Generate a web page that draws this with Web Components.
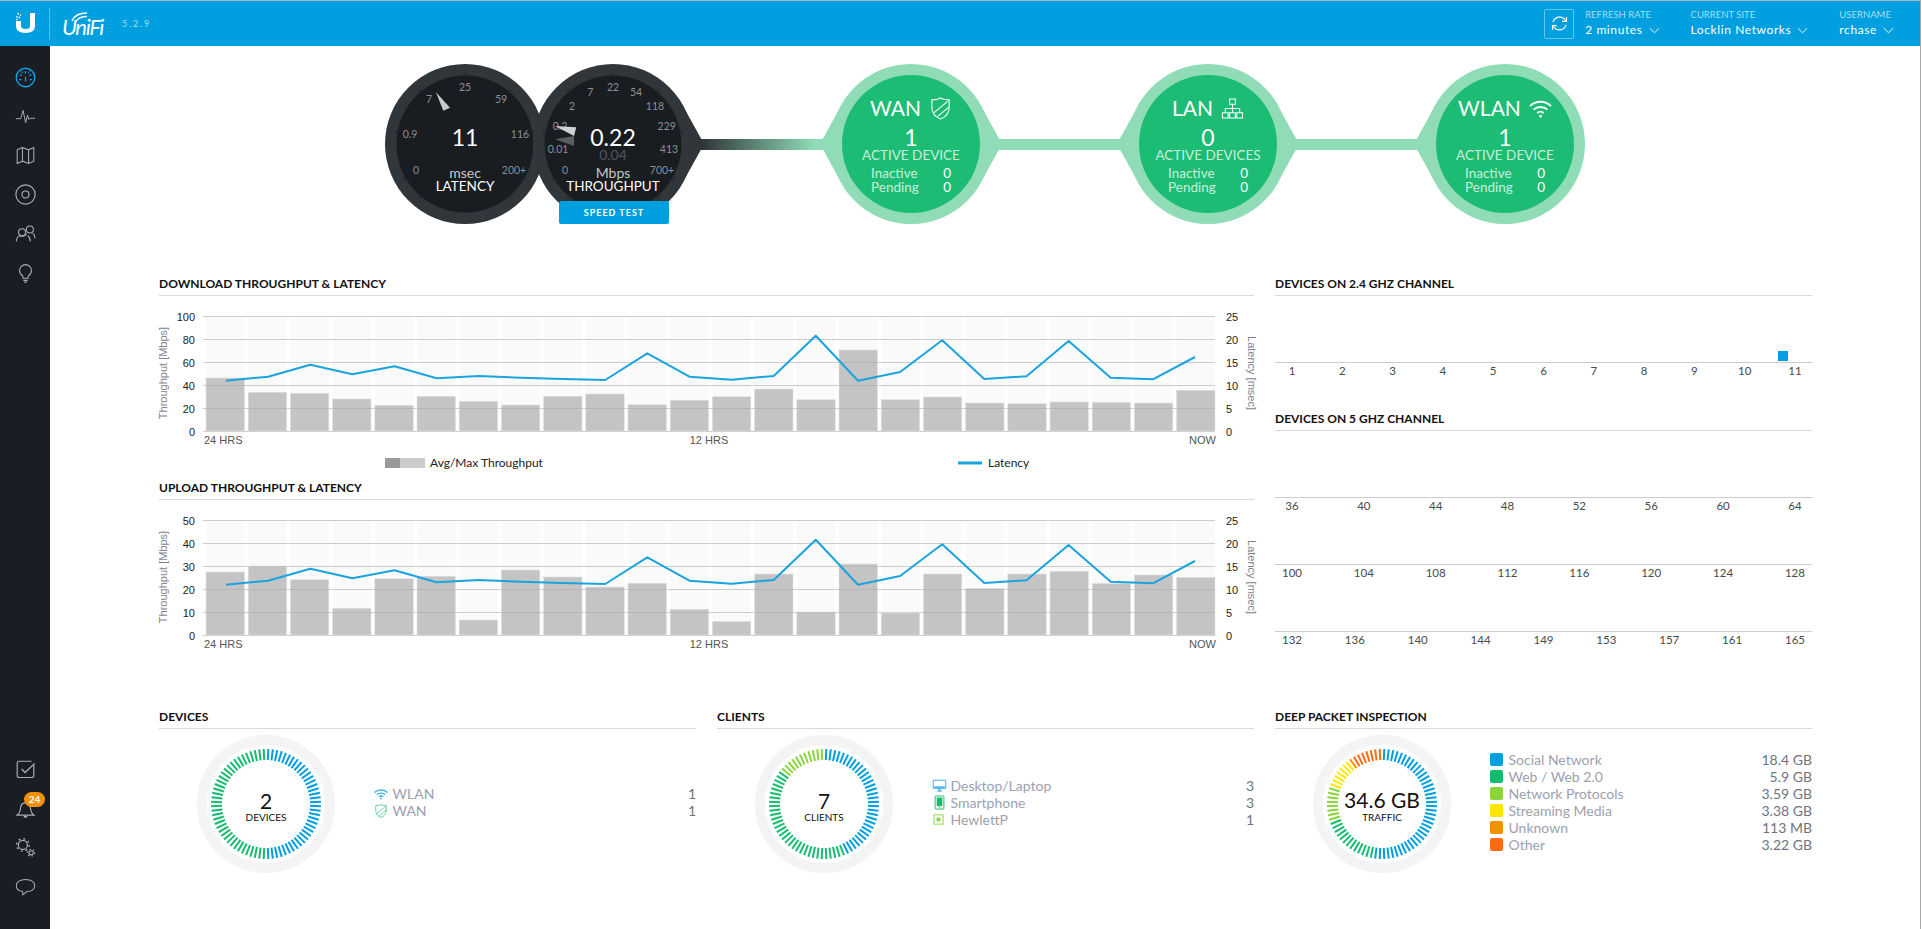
<!DOCTYPE html>
<html lang="en">
<head>
<meta charset="utf-8">
<title>UniFi Dashboard</title>
<style>
  html, body { margin: 0; height: 100%; background: #fff; }
  body { width: 1920px; height: 929px; overflow: hidden; display: flex; flex-direction: column; font-family: Lato, "Liberation Sans", sans-serif; border-right: 1px solid #aaa; }
  .shell { flex: 1; display: flex; min-height: 0; }
  main { flex: 1; min-width: 0; padding-top: 18px; }
  .topology { display: flex; justify-content: center; height: 160px; }
  .panels { display: grid; grid-template-columns: repeat(3, 537px); column-gap: 21px; row-gap: 25px; margin: 51px 0 0 109px; grid-template-rows: 408px auto; }
  .wide { grid-column: span 2; }
  .stats { display: flex; padding-top: 6px; }
  .rows { flex: 1; align-self: center; margin-bottom: 4px; }
  .channels { padding-top: 15px; margin-bottom: 32px; }
  .channels.last { margin-bottom: 0; }
  .sw { width: 13px; height: 13px; border-radius: 2px; display: block; }
</style>
</head>
<body>
<uni-topbar></uni-topbar>
<div class="shell">
  <uni-sidenav></uni-sidenav>
  <main>
    <div class="topology">
      <net-gauge style="margin-right:-12px" value="11" unit="msec" label="LATENCY"
        ticks='[["25",0,-57],["7",-36,-45],["59",36,-45],["0.9",-55,-10],["116",55,-10],["0",-49,26],["200+",49,26]]'
        needles='[["-29,-51.7 -21.7,-33.3 -15,-36.3","#c9cbcc"]]'></net-gauge>
      <net-gauge value="0.22" sub="0.04" unit="Mbps" label="THROUGHPUT" tail
        ticks='[["22",0,-57],["7",-22.7,-52],["54",23,-52],["2",-41,-38],["118",42,-38],["0.2",-53,-18],["229",53.7,-18],["0.01",-55,5],["413",56,4.5],["0",-48,26],["700+",49,26]]'
        needles='[["-58,-18 -36.7,-16.7 -39,-8","#cfd1d2"],["-58,-4.7 -39,-8 -39,2","#5a5e62"]]'>
        <uni-button>SPEED TEST</uni-button>
      </net-gauge>
      <net-link style="flex-basis:138px;background:linear-gradient(to right,#2f3438 6%,#8fdcb7 88%)"></net-link>
      <net-node name="WAN" icon="shield" count="1" caption="ACTIVE DEVICE" left right></net-node>
      <net-link style="flex-basis:137px"></net-link>
      <net-node name="LAN" icon="lan" count="0" caption="ACTIVE DEVICES" left right></net-node>
      <net-link style="flex-basis:137px"></net-link>
      <net-node name="WLAN" icon="wifi" count="1" caption="ACTIVE DEVICE" left></net-node>
    </div>

    <div class="panels">
      <section class="wide">
        <panel-title>DOWNLOAD THROUGHPUT &amp; LATENCY</panel-title>
        <throughput-chart max="100" legend
          bars="53,38.7,37.7,32,25.7,34.7,29.7,26,34.7,37,26.3,30.7,34.3,42,31.3,81,31.3,34,28,27.3,29,28.7,28,40.7"></throughput-chart>
        <panel-title>UPLOAD THROUGHPUT &amp; LATENCY</panel-title>
        <throughput-chart max="50"
          bars="63,69,55.3,26.7,56.3,58.7,15,65,58,48,51.7,25.7,13.5,61,23,71,22,61,46.6,61,63.7,51.5,60,57.6"></throughput-chart>
      </section>
      <section>
        <panel-title>DEVICES ON 2.4 GHZ CHANNEL</panel-title>
        <div class="channels">
          <channel-row labels="1,2,3,4,5,6,7,8,9,10,11" mark="11"></channel-row>
        </div>
        <panel-title>DEVICES ON 5 GHZ CHANNEL</panel-title>
        <div class="channels last">
          <channel-row labels="36,40,44,48,52,56,60,64"></channel-row>
          <channel-row labels="100,104,108,112,116,120,124,128"></channel-row>
          <channel-row labels="132,136,140,144,149,153,157,161,165"></channel-row>
        </div>
      </section>

      <section>
        <panel-title>DEVICES</panel-title>
        <div class="stats">
          <ring-chart total="2" label="DEVICES" segments="180:#009fe0,360:#14bc6e"></ring-chart>
          <div class="rows">
            <stat-row value="1"><ui-icon slot="icon" name="wifi" style="color:#1aa7e3;--size:14px"></ui-icon>WLAN</stat-row>
            <stat-row value="1"><ui-icon slot="icon" name="shield" style="color:#14bc6e;--size:14px"></ui-icon>WAN</stat-row>
          </div>
        </div>
      </section>
      <section>
        <panel-title>CLIENTS</panel-title>
        <div class="stats">
          <ring-chart total="7" label="CLIENTS" segments="154:#009fe0,309:#14bc6e,360:#8ad53a"></ring-chart>
          <div class="rows">
            <stat-row value="3"><ui-icon slot="icon" name="desktop" style="color:#38b2e8;--size:15px"></ui-icon>Desktop/Laptop</stat-row>
            <stat-row value="3"><ui-icon slot="icon" name="phone" style="color:#14bc6e;--size:15px"></ui-icon>Smartphone</stat-row>
            <stat-row value="1"><ui-icon slot="icon" name="chip" style="color:#8ad53a;--size:13px"></ui-icon>HewlettP</stat-row>
          </div>
        </div>
      </section>
      <section>
        <panel-title>DEEP PACKET INSPECTION</panel-title>
        <div class="stats">
          <ring-chart total="34.6 GB" label="TRAFFIC" shift="-1" segments="191:#009fe0,252:#14bc6e,289:#8ad53a,324:#ffe600,326:#f39200,360:#ff6a13"></ring-chart>
          <div class="rows">
            <stat-row value="18.4 GB"><span slot="icon" class="sw" style="background:#009fe0"></span>Social Network</stat-row>
            <stat-row value="5.9 GB"><span slot="icon" class="sw" style="background:#14bc6e"></span>Web / Web 2.0</stat-row>
            <stat-row value="3.59 GB"><span slot="icon" class="sw" style="background:#8ad53a"></span>Network Protocols</stat-row>
            <stat-row value="3.38 GB"><span slot="icon" class="sw" style="background:#ffe600"></span>Streaming Media</stat-row>
            <stat-row value="113 MB"><span slot="icon" class="sw" style="background:#f39200"></span>Unknown</stat-row>
            <stat-row value="3.22 GB"><span slot="icon" class="sw" style="background:#ff6a13"></span>Other</stat-row>
          </div>
        </div>
      </section>
    </div>
  </main>
</div>

<script>
const ICONS = {
  dash: '<circle cx="12" cy="12" r="10.6" stroke-width="1.6"/><path d="M12 4.5v3M5.5 8.5l2.4 1.4M18.5 8.5l-2.4 1.4M4.6 14.5h2.6M16.8 14.5h2.6M12 11v5.5" stroke-width="1.4"/><path d="M7.5 4.8l1.3 2.2M16.5 4.8l-1.3 2.2" stroke-width="1.2"/>',
  pulse: '<path d="M1 14.5h5.5L9.2 5l2.9 14 2.2-8.5 1.6 5 1.5-1.5H23" stroke-width="1.1"/>',
  map: '<path d="M2.5 5.5L8.5 3l7 2.5 6-2.5v15.5l-6 2.5-7-2.5-6 2.5zM8.5 3v15.5M15.5 5.5V21" stroke-width="1.2"/>',
  disc: '<circle cx="12" cy="12" r="11" stroke-width="1.3"/><circle cx="12" cy="12" r="4" stroke-width="1.3"/>',
  users: '<circle cx="8" cy="10.5" r="4" stroke-width="1.2"/><circle cx="17" cy="7.5" r="4" stroke-width="1.2"/><path d="M1.5 21c0-3.5 2-5.6 3.8-6.6M14.5 14.5c1.6 1 3 3 3 6.5M11 14.4c1-.4 1.7-1.1 2.4-1.6M20.2 11.5c1.5 1 2.6 3 2.6 6" stroke-width="1.2"/><path d="M5 14.5c2 1 4 1 6 0" stroke-width="1.2"/>',
  bulb: '<path d="M9 18.5v-2.2C7 15 5.2 12.8 5.2 9.8a6.8 6.8 0 0 1 13.6 0c0 3-1.8 5.2-3.8 6.5v2.2zM9.5 21h5M10.5 23h3" stroke-width="1.2"/>',
  check: '<path d="M21.5 6.5V19a2.2 2.2 0 0 1-2.2 2.2H4.7A2.2 2.2 0 0 1 2.5 19V4.8a2.2 2.2 0 0 1 2.2-2.2H19" stroke-width="1.3"/><path d="M7.5 11.5l4 4L22.5 5" stroke-width="1.5"/>',
  bell: '<path d="M2.5 19.5c2.2-1.5 3.5-4 3.8-8 .3-3.6 2.3-6 5.7-6s5.4 2.4 5.7 6c.3 4 1.6 6.5 3.8 8z" stroke-width="1.3"/><path d="M10 21.5h4" stroke-width="2"/>',
  gears: '<circle cx="9" cy="9" r="5.2" stroke-width="1.4"/><circle cx="9" cy="9" r="7.2" stroke-width="1.6" stroke-dasharray="2.2 3.4"/><circle cx="18.5" cy="18" r="2.4" stroke-width="1.2"/><circle cx="18.5" cy="18" r="4" stroke-width="1.4" stroke-dasharray="1.6 2.5"/>',
  chat: '<path d="M12 4C5.8 4 1.5 6.8 1.5 11c0 3.4 3.2 6 7.2 6.8L9 21.5l4.6-3.7C19 17.4 22.5 14.6 22.5 11 22.5 6.8 18.2 4 12 4z" stroke-width="1.2"/>',
  shield: '<path d="M3 3c3 0 6.5-.5 9-2 2.5 1.5 6 2 9 2v8c0 6-4 10-9 12-5-2-9-6-9-12z" stroke-width="1.1"/><path d="M5 16.500L19.500 4.500M9 20.500L20.500 10.500" stroke-width="1.1"/>',
  lan: '<path d="M9 2h6v5.5H9zM1.5 16.5h6V22h-6zM9 16.5h6V22H9zM16.5 16.5h6V22h-6zM12 7.5v9M4.5 16.5V12h15v4.5" stroke-width="1.1"/>',
  wifi: '<path d="M1 9.5c6.2-6 15.8-6 22 0M4.8 13.2c4-3.8 10.4-3.8 14.4 0M8.5 16.8c2-1.8 5-1.8 7 0" stroke-width="2"/><circle cx="12" cy="20" r="1.4" fill="currentColor" stroke="none"/>',
  desktop: '<path d="M2 3.5h20v13H2zM8 21h8" stroke-width="1.6"/><path d="M3.5 13h17v3h-17zM10.5 16.5h3l.6 4H9.9z" fill="currentColor" stroke="none" opacity=".85"/>',
  phone: '<rect x="5" y="1.5" width="14" height="21" rx="1" stroke-width="1.5"/><rect x="7.5" y="4" width="9" height="14" fill="currentColor" stroke="none"/><circle cx="12" cy="20.3" r="1" fill="currentColor" stroke="none"/>',
  chip: '<rect x="3.5" y="3.5" width="17" height="17" stroke-width="1.7"/><rect x="8.5" y="8.5" width="7" height="7" fill="currentColor" stroke="none"/>',
  sync: '<path d="M4.5 10.5A8 8 0 0 1 19 8.5M19.5 13.5A8 8 0 0 1 5 15.5" stroke-width="1.3"/><path d="M20 4.5v5h-5M4 19.5v-5h5" stroke-width="1.3"/>',
  chevron: '<path d="M2 7l10 10L22 7" stroke-width="2"/>'
};

class UiIcon extends HTMLElement {
  connectedCallback() {
    this.attachShadow({mode: 'open'});
    this.shadowRoot.innerHTML = `
      <style>
        :host { display: inline-flex; line-height: 0; }
        svg { width: var(--size, 20px); height: var(--size, 20px); overflow: visible; fill: none; stroke: currentColor; }
      </style>
      <svg viewBox="0 0 24 24">${ICONS[this.getAttribute('name')]}</svg>`;
  }
}
customElements.define('ui-icon', UiIcon);

class UniTopbar extends HTMLElement {
  constructor() {
    super();
    const menus = [['REFRESH RATE', '2 minutes'], ['CURRENT SITE', 'Locklin Networks'], ['USERNAME', 'rchase']];
    this.attachShadow({mode: 'open'});
    this.shadowRoot.innerHTML = `
      <style>
        :host { display: flex; align-items: center; flex: 0 0 45px; background: #009fe0; border-top: 1px solid #a9b4ba; color: #fff; font-family: Lato, "Liberation Sans", sans-serif; padding: 0 26px 0 16px; }
        .u { width: 19px; height: 20px; fill: #fff; margin-bottom: 1px; }
        .sep { height: 31px; border-left: 1px dotted rgba(255,255,255,.6); margin: 0 12px 0 14px; }
        .brand { position: relative; width: 60px; font-size: 22px; font-style: italic; font-weight: 400; letter-spacing: -1.4px; line-height: 30px; padding-top: 6px; }
        .brand svg { position: absolute; left: 9px; top: 6px; width: 17px; height: 10px; fill: none; stroke: #fff; stroke-width: 1.4; }
        .ver { font-size: 9px; letter-spacing: 1.8px; color: #a6def6; }
        .spacer { flex: 1; }
        .sync { width: 28px; height: 28px; border: 1px solid rgba(255,255,255,.4); border-radius: 2px; display: flex; align-items: center; justify-content: center; margin-right: 11px; --size: 21px; }
        .menu { margin-right: 31px; --size: 11px; }
        .menu:last-child { margin-right: 0; }
        .menu small { display: block; font-size: 9.5px; line-height: 12px; color: #a6def6; }
        .menu div { display: flex; align-items: center; justify-content: space-between; gap: 6px; font-size: 12px; line-height: 16px; letter-spacing: .6px; margin-top: 1px; }
      </style>
      <svg class="u" viewBox="0 0 19 20"><path d="M0 8H5v5q0 3 4.5 3T14 13V0h5v13q0 7-9.500 7T0 13z"/><path d="M1.500 0h1.500v1.500H1.500zM4 1.500h1.200v1.500H4zM.3 3h1.400v1.500H.3zM2.600 3.800h1.500v1.500H2.600zM.3 5.800h1.400v1.500H.3z"/></svg>
      <div class="sep"></div>
      <div class="brand">UniFi<svg viewBox="0 0 17 10"><path d="M1 9C3 4 8 1 16 1M5 9.500C7 6 10 4.500 16 4.500"/></svg></div>
      <span class="ver">5.2.9</span>
      <div class="spacer"></div>
      <div class="sync"><ui-icon name="sync"></ui-icon></div>
      ${menus.map(m => `<div class="menu"><small>${m[0]}</small><div>${m[1]}<ui-icon name="chevron"></ui-icon></div></div>`).join('')}`;
  }
}
customElements.define('uni-topbar', UniTopbar);

class UniSidenav extends HTMLElement {
  constructor() {
    super();
    const item = (n, extra = '') => `<a class="${n === 'dash' ? 'on' : ''}"><ui-icon name="${n}"></ui-icon>${extra}</a>`;
    this.attachShadow({mode: 'open'});
    this.shadowRoot.innerHTML = `
      <style>
        :host { display: flex; flex-direction: column; justify-content: space-between; flex: 0 0 50px; background: #1a1d23; padding: 12px 0 23px; box-sizing: border-box; color: #a8b0b0; font-family: Lato, "Liberation Sans", sans-serif; --size: 21px; }
        a { position: relative; display: flex; align-items: center; justify-content: center; height: 39px; }
        a.on { color: #0aa3e4; }
        .badge { position: absolute; left: 24px; top: 3px; width: 21px; height: 15px; border-radius: 8px; background: #f39200; color: #fff; font-size: 10px; font-weight: 700; line-height: 15px; text-align: center; }
      </style>
      <div>${['dash', 'pulse', 'map', 'disc', 'users', 'bulb'].map(n => item(n)).join('')}</div>
      <div>${item('check')}${item('bell', '<span class="badge">24</span>')}${item('gears')}${item('chat')}</div>`;
  }
}
customElements.define('uni-sidenav', UniSidenav);

const taper = (side) => {
  const s = side === 'left' ? -1 : 1;
  return `M${s * 70} -38L${s * 88} -5.500V5.500L${s * 70} 38Z`;
};

class NetGauge extends HTMLElement {
  connectedCallback() {
    const a = n => this.getAttribute(n);
    const ticks = JSON.parse(a('ticks'));
    const needles = JSON.parse(a('needles'));
    const marks = [-120, -80, -40, 0, 40, 80, 120, -140, 140].map(d => `<rect x="-2" y="-71" width="4" height="3" fill="#282c31" transform="rotate(${d})"/>`).join('');
    this.attachShadow({mode: 'open'});
    this.shadowRoot.innerHTML = `
      <style>
        :host { position: relative; display: block; flex: 0 0 160px; width: 160px; height: 160px; font-family: Lato, "Liberation Sans", sans-serif; }
        svg { display: block; overflow: visible; }
        text { text-anchor: middle; dominant-baseline: central; }
        .tick { font-size: 10.5px; fill: #8b9095; }
        .val { font-size: 23px; fill: #fff; }
        .sub { font-size: 14px; fill: #50555a; }
        .unit { font-size: 14px; fill: #c3c7cb; }
        .name { font-size: 13.5px; fill: #fff; }
        .foot { position: absolute; left: 26px; bottom: 0; }
      </style>
      <svg width="160" height="160" viewBox="-80 -80 160 160">
        ${a('tail') !== null ? `<path d="${taper('right')}" fill="#31363b"/>` : ''}
        <circle r="80" fill="#31363b"/>
        <circle r="68.500" fill="#191c21"/>
        ${marks}
        ${ticks.map(t => `<text class="tick" x="${t[1]}" y="${t[2]}">${t[0]}</text>`).join('')}
        ${needles.map(n => `<polygon points="${n[0]}" fill="${n[1]}"/>`).join('')}
        <text class="val" x="0" y="-7">${a('value')}</text>
        ${a('sub') ? `<text class="sub" x="0" y="10">${a('sub')}</text>` : ''}
        <text class="unit" x="0" y="28">${a('unit')}</text>
        <text class="name" x="0" y="42">${a('label')}</text>
      </svg>
      <div class="foot"><slot></slot></div>`;
  }
}
customElements.define('net-gauge', NetGauge);

class UniButton extends HTMLElement {
  constructor() {
    super();
    this.attachShadow({mode: 'open'});
    this.shadowRoot.innerHTML = `
      <style>
        :host { display: block; width: 110px; height: 23px; background: #009fe0; border-radius: 2px; color: #fff; font: 700 9px/23px Lato, "Liberation Sans", sans-serif; letter-spacing: 1px; text-align: center; }
      </style><slot></slot>`;
  }
}
customElements.define('uni-button', UniButton);

class NetLink extends HTMLElement {
  constructor() {
    super();
    this.attachShadow({mode: 'open'});
    this.shadowRoot.innerHTML = `<style>:host { display: block; flex: 0 0 137px; height: 11px; align-self: center; background: #8fdcb7; }</style>`;
  }
}
customElements.define('net-link', NetLink);

class NetNode extends HTMLElement {
  connectedCallback() {
    const a = n => this.getAttribute(n);
    this.attachShadow({mode: 'open'});
    this.shadowRoot.innerHTML = `
      <style>
        :host { position: relative; display: block; flex: 0 0 160px; width: 160px; height: 160px; color: #fff; font-family: Lato, "Liberation Sans", sans-serif; text-align: center; }
        svg.bg { position: absolute; left: 0; top: 0; overflow: visible; }
        .body { position: relative; display: flex; flex-direction: column; align-items: center; padding-top: 33px; }
        .title { display: flex; align-items: center; gap: 8px; font-size: 21px; font-weight: 400; line-height: 22px; --size: 23px; height: 22px; }
        .count { font-size: 23px; line-height: 24px; margin-top: 6px; margin-bottom: 1px; }
        .cap { font-size: 13.5px; line-height: 14px; margin-top: -2px; color: #c7efdb; white-space: nowrap; }
        .grid { display: grid; grid-template-columns: 1fr auto; width: 80px; margin-top: 4px; font-size: 13.5px; line-height: 14px; text-align: left; color: #c7efdb; }
        .grid b { font-weight: 400; color: #fff; }
      </style>
      <svg class="bg" width="160" height="160" viewBox="-80 -80 160 160">
        ${a('left') !== null ? `<path d="${taper('left')}" fill="#8fdcb7"/>` : ''}
        ${a('right') !== null ? `<path d="${taper('right')}" fill="#8fdcb7"/>` : ''}
        <circle r="80" fill="#8fdcb7"/>
        <circle r="69" fill="#1dbc74"/>
      </svg>
      <div class="body">
        <div class="title">${a('name')}<ui-icon name="${a('icon')}"></ui-icon></div>
        <div class="count">${a('count')}</div>
        <div class="cap">${a('caption')}</div>
        <div class="grid"><span>Inactive</span><b>0</b><span>Pending</span><b>0</b></div>
      </div>`;
  }
}
customElements.define('net-node', NetNode);

class PanelTitle extends HTMLElement {
  constructor() {
    super();
    this.attachShadow({mode: 'open'});
    this.shadowRoot.innerHTML = `
      <style>
        :host { display: block; box-sizing: border-box; height: 21px; border-bottom: 1px solid #d9d9d9; font: 700 12px/17px Lato, "Liberation Sans", sans-serif; color: #111; }
      </style><slot></slot>`;
  }
}
customElements.define('panel-title', PanelTitle);

// latency is the same trace on both charts, in px below the top of the svg
const LATENCY = [332,320,284,313,289,325,318,323,327,330,250,320,329,318,197,332,306,211,327,319,213,323,328,261].map(v => v / 3 - 26);

class ThroughputChart extends HTMLElement {
  connectedCallback() {
    const max = +this.getAttribute('max');
    const bars = this.getAttribute('bars').split(',').map(Number);
    const top = 20, base = 135, step = 23;
    let grid = '', axis = '', bands = '', cols = '';
    for (let i = 0; i <= 5; i++) {
      const y = base - i * step;
      grid += `<line x1="44" x2="1056" y1="${y + .5}" y2="${y + .5}" stroke="#ccc"/>`;
      axis += `<text class="num" x="36" y="${y + 4.500}" text-anchor="end">${i * max / 5}</text>`;
      axis += `<text class="num" x="1067" y="${y + 4.500}">${i * 5}</text>`;
    }
    bars.forEach((h, i) => {
      const x = 47 + i * 42.2;
      bands += `<rect x="${x}" y="${top}" width="38.400" height="${base - top}" fill="#fafafa"/>`;
      cols += `<rect x="${x}" y="${base - h}" width="38.400" height="${h}" fill="#aaa" fill-opacity=".68" stroke="#e0e0e0" stroke-width=".6"/>`;
    });
    const line = LATENCY.map((y, i) => `${(67 + i * 42.13).toFixed(1)},${y.toFixed(1)}`).join(' ');
    const legend = this.hasAttribute('legend') ? `
      <rect x="226" y="162" width="15" height="10" fill="#999"/><rect x="241" y="162" width="25" height="10" fill="#ccc"/>
      <text class="leg" x="271" y="171">Avg/Max Throughput</text>
      <rect x="799" y="165.500" width="24" height="3" fill="#1ba3e0"/>
      <text class="leg" x="829" y="171">Latency</text>` : '';
    this.attachShadow({mode: 'open'});
    this.shadowRoot.innerHTML = `
      <style>
        :host { display: block; height: 183px; }
        svg { display: block; overflow: visible; }
        .num { font: 11px "Liberation Sans", Arial, sans-serif; fill: #222; }
        .x { font: 11px "Liberation Sans", Arial, sans-serif; fill: #555; }
        .ax { font: 11px "Liberation Sans", Arial, sans-serif; fill: #7f8494; text-anchor: middle; }
        .leg { font: 12px Lato, "Liberation Sans", sans-serif; fill: #222; }
      </style>
      <svg width="1095" height="183" viewBox="0 0 1095 183">
        ${bands}${grid}${cols}
        <polyline points="${line}" fill="none" stroke="#1ba3e0" stroke-width="2" stroke-linejoin="round"/>
        ${axis}
        <text class="x" x="45" y="148">24 HRS</text>
        <text class="x" x="550" y="148" text-anchor="middle">12 HRS</text>
        <text class="x" x="1057" y="148" text-anchor="end">NOW</text>
        <text class="ax" transform="translate(8 77) rotate(-90)">Throughput [Mbps]</text>
        <text class="ax" transform="translate(1089 77) rotate(90)">Latency [msec]</text>
        ${legend}
      </svg>`;
  }
}
customElements.define('throughput-chart', ThroughputChart);

class ChannelRow extends HTMLElement {
  connectedCallback() {
    const mark = this.getAttribute('mark');
    const cells = this.getAttribute('labels').split(',').map(l =>
      `<span>${l}${l === mark ? '<i></i>' : ''}</span>`).join('');
    this.attachShadow({mode: 'open'});
    this.shadowRoot.innerHTML = `
      <style>
        :host { display: flex; justify-content: space-between; margin-top: 51px; padding-top: 1px; border-top: 1px solid #ccc; font: 11.500px/14px Lato, "Liberation Sans", sans-serif; color: #4a4a4a; }
        span { position: relative; width: 34px; text-align: center; }
        i { position: absolute; left: 0; bottom: 17px; width: 10px; height: 10px; background: #009fe0; }
      </style>${cells}`;
  }
}
customElements.define('channel-row', ChannelRow);

class RingChart extends HTMLElement {
  connectedCallback() {
    const segs = this.getAttribute('segments').split(',').map(s => s.split(':'));
    const n = 76;
    const shift = +(this.getAttribute('shift') || 0);
    let ticks = '';
    for (let i = 0; i < n; i++) {
      const deg = (i + .5) * 360 / n;
      const seg = segs.find(s => deg < +s[0]);
      ticks += `<line x1="0" x2="0" y1="-55" y2="-44" stroke="${seg[1]}" stroke-width="2" transform="rotate(${deg.toFixed(2)})"/>`;
    }
    this.attachShadow({mode: 'open'});
    this.shadowRoot.innerHTML = `
      <style>
        :host { display: flex; justify-content: center; flex: 0 0 213px; margin-right: 2px; font-family: Lato, "Liberation Sans", sans-serif; }
        svg { display: block; }
        text { text-anchor: middle; fill: #111; }
        .t { font-size: 21px; }
        .l { font-size: 10px; }
      </style>
      <svg width="138" height="138" viewBox="-69 -69 138 138">
        <circle r="64" fill="none" stroke="#f4f4f4" stroke-width="10"/>
        ${ticks}
        <text class="t" x="0" y="${5 + shift}">${this.getAttribute('total')}</text>
        <text class="l" x="0" y="16.500">${this.getAttribute('label')}</text>
      </svg>`;
  }
}
customElements.define('ring-chart', RingChart);

class StatRow extends HTMLElement {
  connectedCallback() {
    this.attachShadow({mode: 'open'});
    this.shadowRoot.innerHTML = `
      <style>
        :host { display: flex; align-items: center; height: 17px; font: 14px/17px Lato, "Liberation Sans", sans-serif; color: #9da1ae; }
        .ic { display: flex; align-items: center; justify-content: flex-start; width: 18.500px; }
        .v { margin-left: auto; color: #6d7480; }
      </style>
      <span class="ic"><slot name="icon"></slot></span><slot></slot><span class="v">${this.getAttribute('value')}</span>`;
  }
}
customElements.define('stat-row', StatRow);
</script>
</body>
</html>
